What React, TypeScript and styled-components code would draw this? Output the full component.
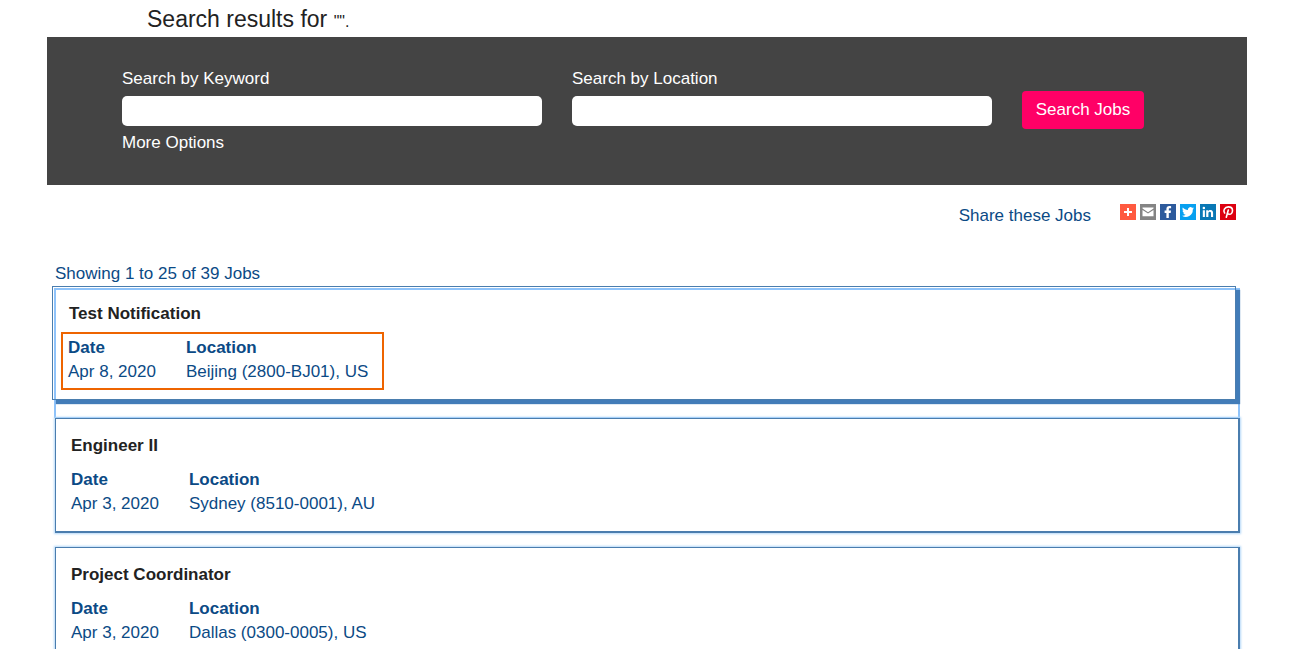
import React from 'react';
import styled, { createGlobalStyle } from 'styled-components';

const GlobalStyle = createGlobalStyle`
  *, *::before, *::after { box-sizing: border-box; }
  body {
    margin: 0;
    background: #fff;
    color: #222;
    font: 17px/24px "Liberation Sans", Arial, sans-serif;
  }
`;

const Page = styled.main`
  padding: 0 57px 0 47px;
`;

const Heading = styled.h1`
  margin: 0;
  padding: 2px 0 0 100px;
  font-size: 23px;
  line-height: 35px;
  font-weight: 400;
`;

const Query = styled.span`
  font-size: 16px;
  line-height: 16px;
`;

const SearchPanel = styled.form`
  display: flex;
  align-items: flex-start;
  gap: 30px;
  padding: 30px 103px 30px 75px;
  background: #444;
  color: #fff;
`;

const Field = styled.div`
  flex: 1;
  display: flex;
  flex-direction: column;
  align-items: flex-start;
`;

const Label = styled.label`
  margin-bottom: 5px;
`;

const TextInput = styled.input`
  width: 100%;
  height: 30px;
  padding: 0 8px;
  border: 0;
  border-radius: 5px;
  background: #fff;
  font: inherit;
`;

const MoreLink = styled.a`
  margin-top: 5px;
  color: #fff;
  text-decoration: none;
`;

const SearchButton = styled.button`
  width: 122px;
  height: 38px;
  margin-top: 24px;
  padding: 0;
  border: 0;
  border-radius: 4px;
  background: #ff0066;
  color: #fff;
  font: inherit;
  cursor: pointer;
`;

const ShareBar = styled.div`
  display: flex;
  justify-content: flex-end;
  gap: 29px;
  padding: 19px 11px 34px 0;
  color: #0b4a85;
`;

const ShareIcons = styled.div`
  display: flex;
  gap: 4px;
`;

const ShareLink = styled.a<{ $color: string }>`
  display: block;
  width: 16px;
  height: 16px;
  background: ${(p) => p.$color};

  svg { display: block; width: 16px; height: 16px; }
`;

const Count = styled.p`
  margin: 0 0 2px;
  padding-left: 8px;
  color: #0b4a85;
`;

const JobList = styled.ul`
  list-style: none;
  margin: 0;
  padding: 0 7px 0 8px;
`;

const JobItem = styled.li`
  margin-bottom: 14px;
`;

const ActiveItem = styled.li`
  margin-left: -1px;
  border: solid #8fc3fa;
  border-width: 2px 2px 1px;
`;

const Card = styled.article`
  padding: 15px 14px 15px 15px;
  border: solid #4a7dae;
  border-width: 1px 2px 2px 1px;
  box-shadow: 0 0 2px 1px #b5d8f8;
`;

const ActiveCard = styled.article`
  margin: -4px 2px 17px -4px;
  padding: 15px 14px 9px 8px;
  border: 1px solid #4a7dae;
  box-shadow: 4px 4px 1px #427cb8;
`;

const JobTitle = styled.h2<{ $inset?: boolean }>`
  margin: 0 0 ${(p) => (p.$inset ? 6 : 10)}px;
  padding-left: ${(p) => (p.$inset ? 8 : 0)}px;
  font-size: 17px;
  line-height: 24px;
`;

const Highlight = styled.div`
  width: fit-content;
  padding: 2px 14px 4px 5px;
  border: 2px solid #ee6400;
`;

const Details = styled.table`
  border-collapse: collapse;
  color: #0b4a85;

  th, td {
    padding: 0 30px 0 0;
    text-align: left;
    white-space: nowrap;
  }
  th:last-child, td:last-child { padding-right: 0; }
`;

const jobs = [
  { title: 'Engineer II', date: 'Apr 3, 2020', location: 'Sydney (8510-0001), AU' },
  { title: 'Project Coordinator', date: 'Apr 3, 2020', location: 'Dallas (0300-0005), US' },
];

const shares = [
  { name: 'More', color: '#ff5a40', art: <path d="M7 4h2v3h3v2H9v3H7V9H4V7h3z" /> },
  {
    name: 'Email',
    color: '#848484',
    art: <path d="M2.5 3.6h11v1L8 8.2 2.5 4.6zM2.5 6l5.5 3.6L13.5 6v6.2h-11z" />,
  },
  {
    name: 'Facebook',
    color: '#2d5a9c',
    art: <path d="M6.4 14V8.9H4.6V6.5h1.8V5.1C6.4 3.2 7.5 2.1 9.4 2.1c.8 0 1.4.1 1.7.1v2.1H9.9c-.9 0-1.1.4-1.1 1v1.2h2.2l-.3 2.4H8.8V14z" />,
  },
  {
    name: 'Twitter',
    color: '#08a0f0',
    art: <path d="M14 4.2c-.4.2-.9.3-1.4.4.5-.3.9-.8 1.1-1.4-.5.3-1 .5-1.6.6a2.500 2.500 0 0 0-4.200 2.300c-2-.1-3.900-1.100-5.100-2.600-.7 1.100-.3 2.600.8 3.300-.4 0-.8-.1-1.100-.3 0 1.200.8 2.200 2 2.500-.4.100-.7.100-1.100 0 .3 1 1.200 1.700 2.300 1.700A5 5 0 0 1 2 11.800 7 7 0 0 0 12.800 5.600c.5-.4.9-.8 1.200-1.400z" />,
  },
  {
    name: 'LinkedIn',
    color: '#0a78b5',
    art: <path d="M2.8 6.2h2.1v6.9H2.8zM3.85 2.7a1.25 1.25 0 1 1 0 2.5 1.25 1.25 0 0 1 0-2.5zM6.2 6.2h2v1c.4-.7 1.1-1.2 2.2-1.2 2.2 0 2.7 1.4 2.7 3.3v3.8H11V9.7c0-.9-.1-1.9-1.2-1.9S8.4 8.7 8.4 9.7v3.4H6.200z" />,
  },
  {
    name: 'Pinterest',
    color: '#dd0010',
    art: (
      <g fill="none" stroke="#fff" strokeWidth="1.6" strokeLinecap="round">
        <path d="M4.6 9C2.8 6.6 4.6 2.9 8.3 2.9c2.7 0 4.2 1.6 4.2 3.5 0 2.2-1.4 3.9-3.1 3.9-.9 0-1.6-.5-1.8-1.1" />
        <path d="M8.3 6 6.3 13.2" />
      </g>
    ),
  },
];

function JobDetails({ date, location }: { date: string; location: string }) {
  return (
    <Details>
      <thead>
        <tr><th scope="col">Date</th><th scope="col">Location</th></tr>
      </thead>
      <tbody>
        <tr><td>{date}</td><td>{location}</td></tr>
      </tbody>
    </Details>
  );
}

export default function App() {
  return (
    <>
      <GlobalStyle />
      <Page>
        <Heading>Search results for <Query>"".</Query></Heading>
        <SearchPanel onSubmit={(e) => e.preventDefault()}>
          <Field>
            <Label htmlFor="keyword">Search by Keyword</Label>
            <TextInput id="keyword" type="text" />
            <MoreLink href="#options">More Options</MoreLink>
          </Field>
          <Field>
            <Label htmlFor="location">Search by Location</Label>
            <TextInput id="location" type="text" />
          </Field>
          <SearchButton type="submit">Search Jobs</SearchButton>
        </SearchPanel>
        <ShareBar>
          <span>Share these Jobs</span>
          <ShareIcons>
            {shares.map((s) => (
              <ShareLink key={s.name} href={`#${s.name.toLowerCase()}`} aria-label={s.name} $color={s.color}>
                <svg viewBox="0 0 16 16" fill="#fff" aria-hidden="true">{s.art}</svg>
              </ShareLink>
            ))}
          </ShareIcons>
        </ShareBar>
        <Count>Showing 1 to 25 of 39 Jobs</Count>
        <JobList>
          <ActiveItem>
            <ActiveCard>
              <JobTitle $inset>Test Notification</JobTitle>
              <Highlight>
                <JobDetails date="Apr 8, 2020" location="Beijing (2800-BJ01), US" />
              </Highlight>
            </ActiveCard>
          </ActiveItem>
          {jobs.map((job) => (
            <JobItem key={job.title}>
              <Card>
                <JobTitle>{job.title}</JobTitle>
                <JobDetails date={job.date} location={job.location} />
              </Card>
            </JobItem>
          ))}
        </JobList>
      </Page>
    </>
  );
}
